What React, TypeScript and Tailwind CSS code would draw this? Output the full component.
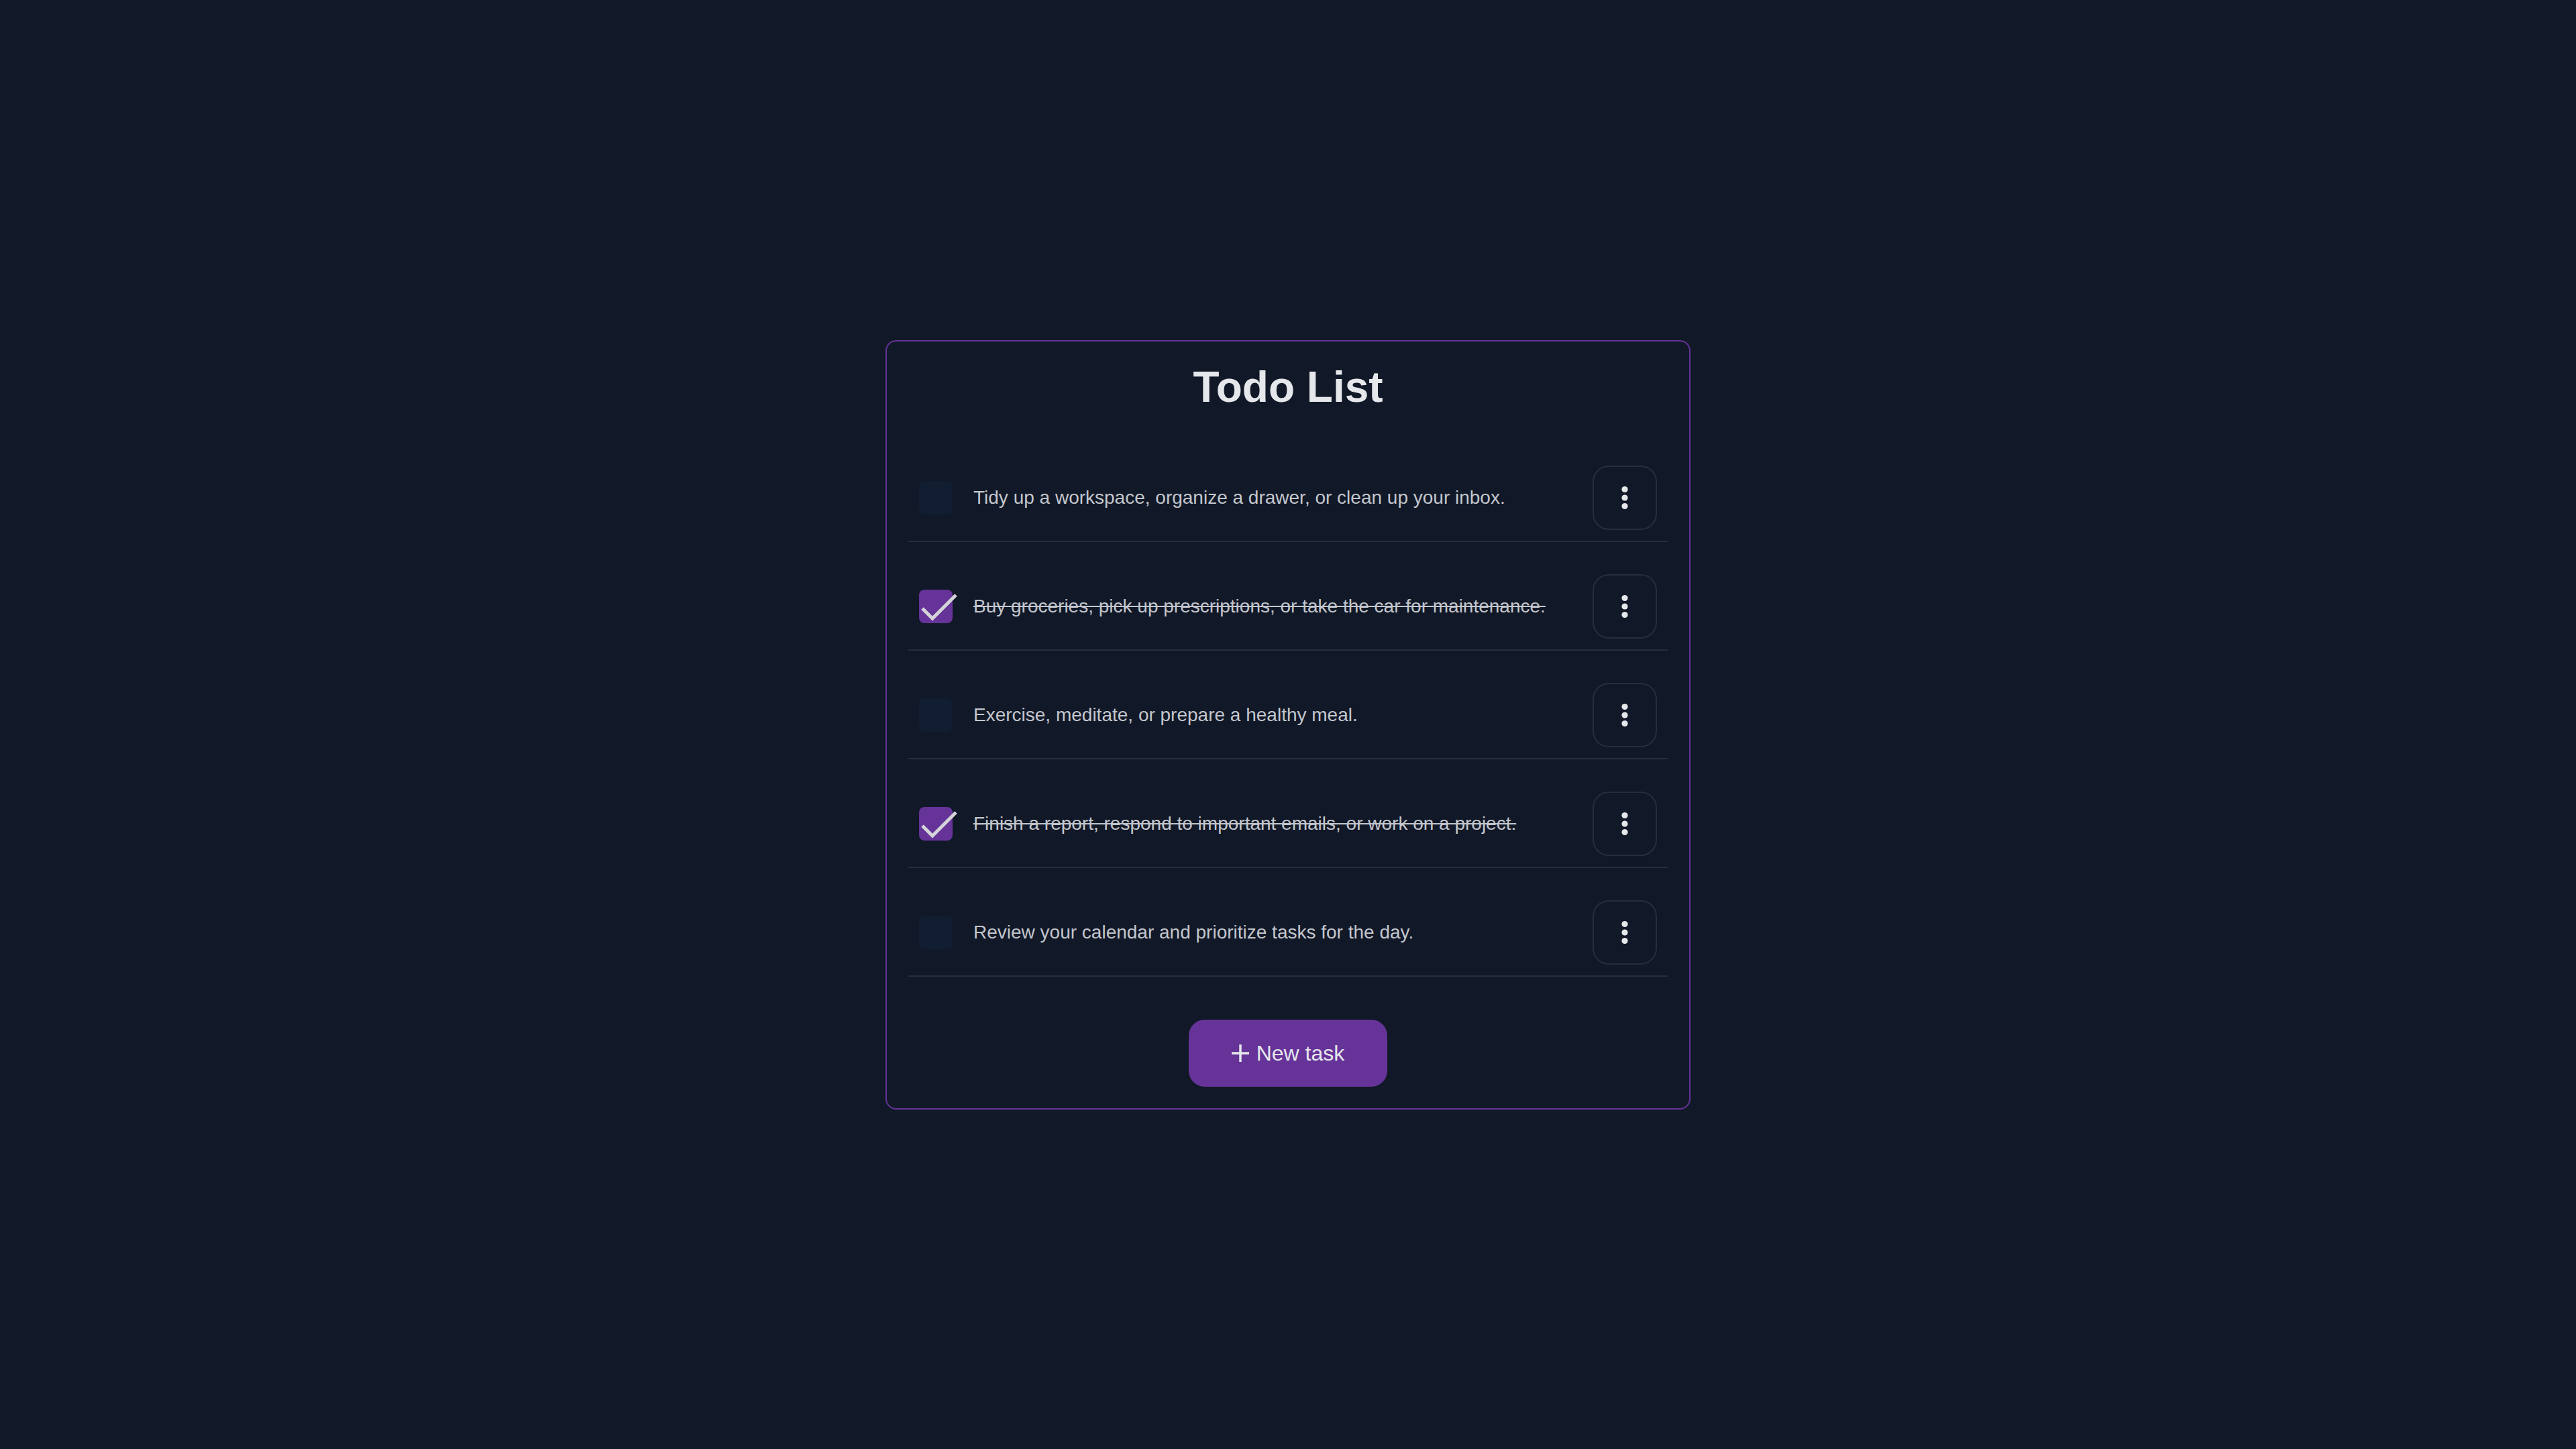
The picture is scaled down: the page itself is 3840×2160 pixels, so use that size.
import { useState } from 'react';

interface Task {
  id: number;
  text: string;
  done: boolean;
}

const initialTasks: Task[] = [
  { id: 1, text: 'Tidy up a workspace, organize a drawer, or clean up your inbox.', done: false },
  { id: 2, text: 'Buy groceries, pick up prescriptions, or take the car for maintenance.', done: true },
  { id: 3, text: 'Exercise, meditate, or prepare a healthy meal.', done: false },
  { id: 4, text: 'Finish a report, respond to important emails, or work on a project.', done: true },
  { id: 5, text: 'Review your calendar and prioritize tasks for the day.', done: false },
];

function DotsIcon() {
  return (
    <svg width="10" height="36" viewBox="0 0 10 36" fill="#e5e7eb">
      <circle cx="5" cy="5.5" r="4.6" />
      <circle cx="5" cy="18" r="4.6" />
      <circle cx="5" cy="30.5" r="4.6" />
    </svg>
  );
}

function Checkbox({ checked, onToggle }: { checked: boolean; onToggle: () => void }) {
  return (
    <button
      onClick={onToggle}
      className={`relative w-[50px] h-[50px] shrink-0 rounded-[8px] ${checked ? 'bg-[#663399]' : 'bg-[#111d31]'}`}
    >
      {checked && (
        <svg
          className="absolute left-0 top-0 overflow-visible"
          width="50"
          height="50"
          viewBox="0 0 50 50"
          fill="none"
        >
          <path d="M5 28 L20 43 L55 8" stroke="#d4d4d8" strokeWidth="5" />
        </svg>
      )}
    </button>
  );
}

export default function App() {
  const [tasks, setTasks] = useState<Task[]>(initialTasks);

  const toggle = (id: number) =>
    setTasks((prev) => prev.map((t) => (t.id === id ? { ...t, done: !t.done } : t)));

  return (
    <div className="min-h-screen w-full bg-[#111827] flex items-center justify-center font-['Liberation_Sans',Arial,sans-serif]">
      <div className="w-[1200px] bg-[#111827] border-2 border-[#663399] rounded-2xl p-8 flex flex-col">
        <h1 className="text-center text-[64px] leading-[72px] font-bold text-[#e5e7eb]">Todo List</h1>

        <ul className="mt-[65px] flex flex-col gap-8">
          {tasks.map((task) => (
            <li
              key={task.id}
              className="flex items-center px-4 py-4 border-b-2 border-[#282d3c]"
            >
              <Checkbox checked={task.done} onToggle={() => toggle(task.id)} />
              <span
                className={`ml-[31px] flex-1 text-[28px] leading-9 text-[#c3c6cd] ${task.done ? 'line-through' : ''}`}
              >
                {task.text}
              </span>
              <button className="w-[96px] h-[96px] shrink-0 rounded-[24px] border-2 border-[#282d3c] flex items-center justify-center">
                <DotsIcon />
              </button>
            </li>
          ))}
        </ul>

        <div className="mt-16 flex justify-center">
          <button
            onClick={() =>
              setTasks((prev) => [...prev, { id: Date.now(), text: 'New task', done: false }])
            }
            className="flex items-center gap-[11px] px-16 py-8 rounded-[24px] bg-[#663399] text-[#e5e7eb] text-[32px] leading-9"
          >
            <svg width="26" height="26" viewBox="0 0 26 26" fill="#e5e7eb">
              <rect x="11.25" y="0" width="3.5" height="26" />
              <rect x="0" y="11.25" width="26" height="3.5" />
            </svg>
            New task
          </button>
        </div>
      </div>
    </div>
  );
}
